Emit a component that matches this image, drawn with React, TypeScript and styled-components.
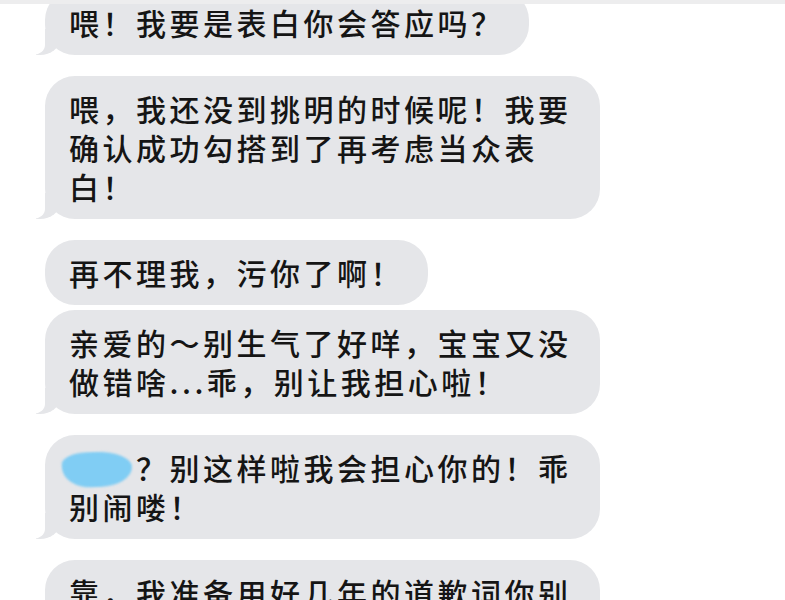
import React from 'react';
import styled, { createGlobalStyle, css } from 'styled-components';

const GlobalStyle = createGlobalStyle`
    html, body {
        margin: 0;
        padding: 0;
        background: #ffffff;
    }
    body {
        font-family: "Noto Sans CJK SC", "Noto Sans", sans-serif;
    }
`

const BUBBLE_GRAY = '#e5e6e9'

const Screen = styled.div`
    width: 785px;
    height: 600px;
    overflow: hidden;
    display: flex;
    flex-direction: column;
    background: #ffffff;
`
const TopRule = styled.div`
    height: 4px;
    flex-shrink: 0;
    background: #ededee;
`
const Thread = styled.div`
    flex: 1;
    overflow: hidden;
    display: flex;
    flex-direction: column;
    align-items: flex-start;
    padding-left: 45px;
    & > :first-child {
        margin-top: -14px;
    }
`
const Bubble = styled.div<{ $tail: boolean }>`
    position: relative;
    flex-shrink: 0;
    box-sizing: border-box;
    width: fit-content;
    max-width: 555px;
    padding: 13px 24px;
    border-radius: 30px;
    background: ${BUBBLE_GRAY};
    color: #151515;
    font-size: 30px;
    font-weight: 500;
    line-height: 39px;
    letter-spacing: 3.5px;
    margin-bottom: ${p => p.$tail ? '21px' : '5px'};

    ${p => p.$tail && css`
        &::before {
            content: '';
            position: absolute;
            left: -9px;
            bottom: 0;
            width: 24px;
            height: 26px;
            background: ${BUBBLE_GRAY};
            border-bottom-right-radius: 20px 16px;
        }
        &::after {
            content: '';
            position: absolute;
            left: -26px;
            bottom: 0;
            width: 26px;
            height: 28px;
            background: #ffffff;
            border-bottom-right-radius: 12px 10px;
        }
    `}
`
// painted-over name in the original screenshot
const Redacted = styled.span`
    display: inline-block;
    width: 70px;
    height: 35px;
    margin-left: -7px;
    margin-right: 4px;
    vertical-align: -7px;
    background: #80cdf4;
    border-radius: 40% 55% 50% 45% / 35% 50% 60% 65%;
    transform: rotate(-2deg);
    filter: blur(1px);
`

type Message = {
    id: number
    text: React.ReactNode
    tail: boolean
}

const messages: Message[] = [
    { id: 1, text: '喂！我要是表白你会答应吗？', tail: true },
    { id: 2, text: '喂，我还没到挑明的时候呢！我要确认成功勾搭到了再考虑当众表白！', tail: true },
    { id: 3, text: '再不理我，污你了啊！', tail: false },
    { id: 4, text: '亲爱的～别生气了好咩，宝宝又没做错啥...乖，别让我担心啦！', tail: true },
    {
        id: 5,
        text: <><Redacted />？别这样啦我会担心你的！乖别闹喽！</>,
        tail: true
    },
    { id: 6, text: '靠，我准备用好几年的道歉词你别这样对我好吗', tail: true },
]

const App = () => {
    return (
        <Screen>
            <GlobalStyle />
            <TopRule />
            <Thread>
                {messages.map(m => (
                    <Bubble key={m.id} $tail={m.tail}>
                        {m.text}
                    </Bubble>
                ))}
            </Thread>
        </Screen>
    );
};

export default App;
